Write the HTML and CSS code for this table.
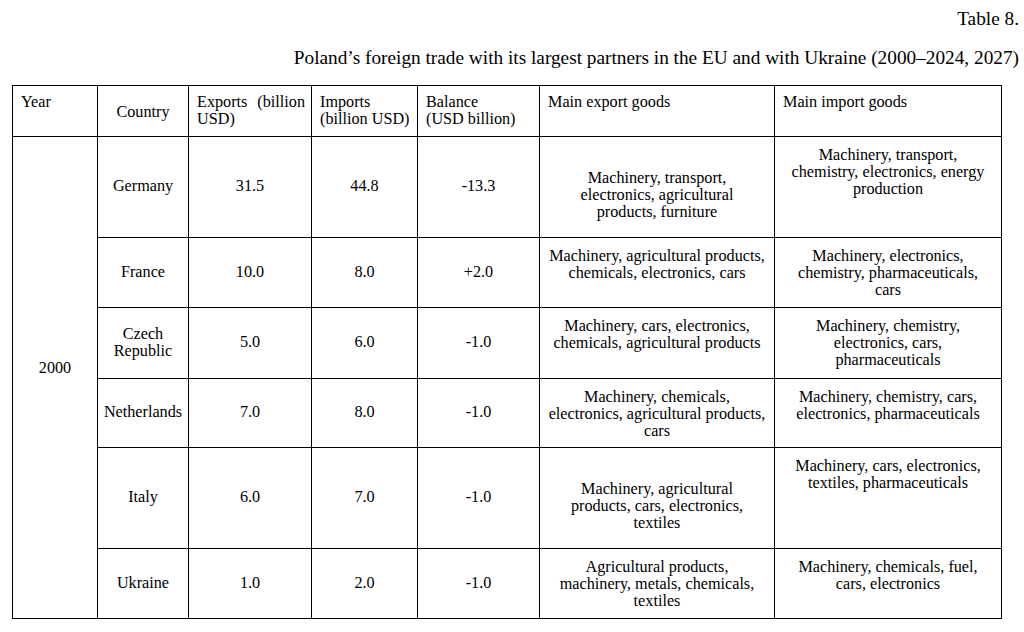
FILE: index.html
```html
<!DOCTYPE html>
<html lang="en">
<head>
<meta charset="utf-8">
<title>Table 8</title>
<link rel="stylesheet" href="styles.css">
</head>
<body>
<div class="page">
  <div class="table-no">Table 8.</div>
  <div class="caption">Poland’s foreign trade with its largest partners in the EU and with Ukraine (2000–2024, 2027)</div>
  <table class="trade">
    <colgroup>
      <col class="c-year">
      <col class="c-country">
      <col class="c-exp">
      <col class="c-imp">
      <col class="c-bal">
      <col class="c-expg">
      <col class="c-impg">
    </colgroup>
    <thead>
      <tr class="row-head">
        <th class="h-left">Year</th>
        <th class="h-mid">Country</th>
        <th class="h-left h-justify">Exports (billion USD)</th>
        <th class="h-left">Imports<br>(billion USD)</th>
        <th class="h-left">Balance<br>(USD billion)</th>
        <th class="h-left">Main export goods</th>
        <th class="h-left">Main import goods</th>
      </tr>
    </thead>
    <tbody>
      <tr class="row-tall">
        <td class="year" rowspan="6">2000</td>
        <td class="mid">Germany</td>
        <td class="mid">31.5</td>
        <td class="mid">44.8</td>
        <td class="mid">-13.3</td>
        <td class="goods goods-mid">Machinery, transport,<br>electronics, agricultural<br>products, furniture</td>
        <td class="goods">Machinery, transport,<br>chemistry, electronics, energy<br>production</td>
      </tr>
      <tr class="row">
        <td class="mid">France</td>
        <td class="mid">10.0</td>
        <td class="mid">8.0</td>
        <td class="mid">+2.0</td>
        <td class="goods">Machinery, agricultural products,<br>chemicals, electronics, cars</td>
        <td class="goods">Machinery, electronics,<br>chemistry, pharmaceuticals,<br>cars</td>
      </tr>
      <tr class="row row-plus">
        <td class="mid">Czech<br>Republic</td>
        <td class="mid">5.0</td>
        <td class="mid">6.0</td>
        <td class="mid">-1.0</td>
        <td class="goods">Machinery, cars, electronics,<br>chemicals, agricultural products</td>
        <td class="goods">Machinery, chemistry,<br>electronics, cars,<br>pharmaceuticals</td>
      </tr>
      <tr class="row row-minus">
        <td class="mid">Netherlands</td>
        <td class="mid">7.0</td>
        <td class="mid">8.0</td>
        <td class="mid">-1.0</td>
        <td class="goods">Machinery, chemicals,<br>electronics, agricultural products,<br>cars</td>
        <td class="goods">Machinery, chemistry, cars,<br>electronics, pharmaceuticals</td>
      </tr>
      <tr class="row-tall">
        <td class="mid">Italy</td>
        <td class="mid">6.0</td>
        <td class="mid">7.0</td>
        <td class="mid">-1.0</td>
        <td class="goods goods-mid">Machinery, agricultural<br>products, cars, electronics,<br>textiles</td>
        <td class="goods">Machinery, cars, electronics,<br>textiles, pharmaceuticals</td>
      </tr>
      <tr class="row">
        <td class="mid">Ukraine</td>
        <td class="mid">1.0</td>
        <td class="mid">2.0</td>
        <td class="mid">-1.0</td>
        <td class="goods">Agricultural products,<br>machinery, metals, chemicals,<br>textiles</td>
        <td class="goods">Machinery, chemicals, fuel,<br>cars, electronics</td>
      </tr>
    </tbody>
  </table>
</div>
</body>
</html>
```

FILE: styles.css
```css
html, body {
  margin: 0;
  padding: 0;
  background: #ffffff;
  color: #000000;
  font-family: "Liberation Serif", "Times New Roman", serif;
}

.page {
  padding: 8px 5px 0 12px;
}

.table-no {
  text-align: right;
  font-size: 19.3px;
  line-height: 22px;
}

.caption {
  text-align: right;
  font-size: 19.3px;
  line-height: 22px;
  margin-top: 17px;
}

.trade {
  margin-top: 16px;
  border-collapse: collapse;
  table-layout: fixed;
  width: 989px;
  font-family: "Liberation Serif", "Times New Roman", serif;
  font-size: 16.2px;
  line-height: 17.2px;
}

.c-year { width: 85px; }
.c-country { width: 91px; }
.c-exp { width: 123px; }
.c-imp { width: 106px; }
.c-bal { width: 122px; }
.c-expg { width: 235px; }
.c-impg { width: 227px; }

.trade th,
.trade td {
  border: 1px solid #000000;
  font-family: "Liberation Serif", "Times New Roman", serif;
  font-weight: normal;
  padding: 0 6px 0 8px;
}

.row-head { height: 51px; }
.row-tall { height: 101px; }
.row { height: 70px; }
.row-plus { height: 71px; }
.row-minus { height: 69px; }

.trade th.h-left {
  text-align: left;
  vertical-align: top;
  padding-top: 8px;
}

.trade th.h-justify {
  text-align: justify;
}

.trade th.h-mid {
  text-align: center;
  vertical-align: middle;
  padding: 4px 4px 0;
}

.trade td.mid {
  text-align: center;
  vertical-align: middle;
  padding: 0 4px;
}

.trade td.year {
  text-align: center;
  vertical-align: middle;
  padding: 0 4px 17px;
}

.trade td.goods {
  text-align: center;
  vertical-align: top;
  padding: 10px 4px 0;
}

.trade td.goods-mid {
  vertical-align: middle;
  padding-top: 17px;
  padding-bottom: 0;
}
```
